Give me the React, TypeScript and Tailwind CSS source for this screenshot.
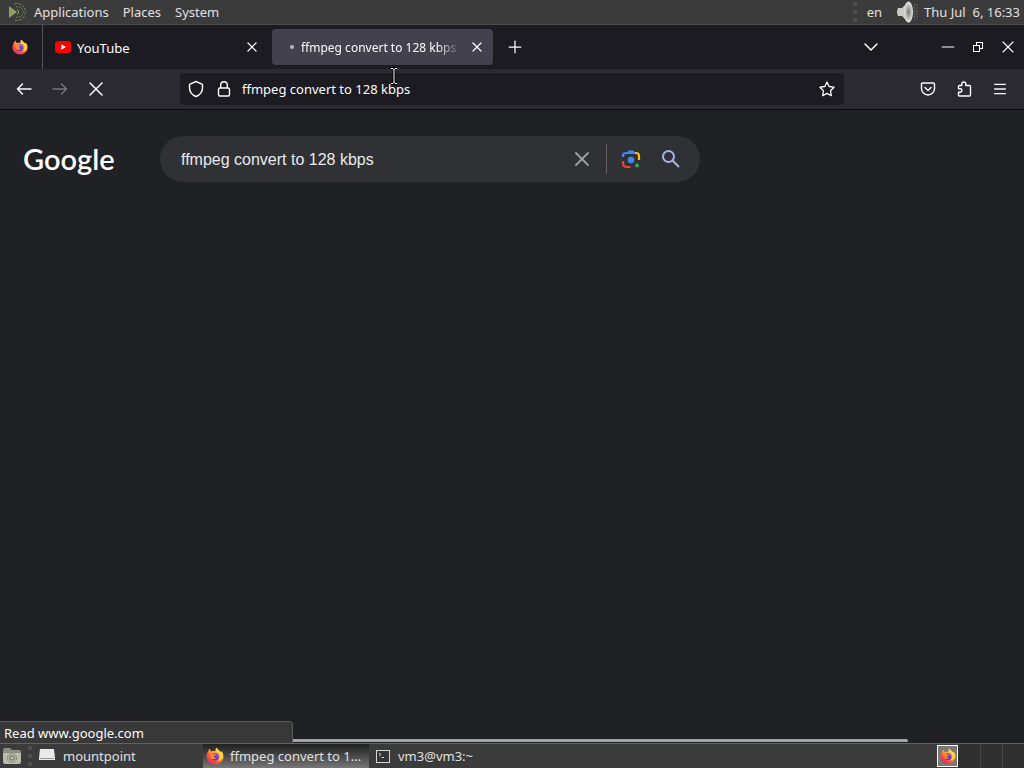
import { ChevronDown, Menu, Minus, Plus, X } from "lucide-react";

type IconProps = {
    className?: string;
};

const FirefoxIcon = ({ className = "" }: IconProps) => (
    <svg viewBox="0 0 32 32" className={className} aria-hidden="true">
        <defs>
            <linearGradient id="fox-body" x1="0.85" y1="0.1" x2="0.2" y2="0.95">
                <stop offset="0" stopColor="#fff14a" />
                <stop offset="0.35" stopColor="#ffb12c" />
                <stop offset="0.65" stopColor="#ff5a36" />
                <stop offset="1" stopColor="#e8246b" />
            </linearGradient>
            <linearGradient id="fox-globe" x1="0.7" y1="0" x2="0.3" y2="1">
                <stop offset="0" stopColor="#a44bf0" />
                <stop offset="1" stopColor="#4b35a8" />
            </linearGradient>
        </defs>
        <path
            fill="url(#fox-body)"
            d="M19 1c-2 2-3 5-2 7-3-1-5-1-7 0C8 7 7 5 7 3 5 4 4 6 4 8 2 10 1 13 1 17c0 8 7 14 15 14s15-6 15-14c0-4-1-8-4-10 0 1 0 2-1 2-2-3-5-4-7-8z"
        />
        <circle cx="16" cy="17" r="7" fill="url(#fox-globe)" />
        <path
            fill="#ff8a2b"
            d="M6 14c2-3 5-3 7-2 1 1 3 1 5 1-1 2-3 2-4 3 0 2 1 4 4 4-3 3-9 2-10-2l-2-4z"
        />
        <path fill="#ffd83b" d="M18 5c4 2 7 6 7 11 0 4-2 7-5 9 6 0 10-6 9-12-1-4-6-5-8-9z" />
    </svg>
);

const MateIcon = () => (
    <svg viewBox="0 0 20 20" className="size-5" fill="none" aria-hidden="true">
        <path d="M2 4l8 6-8 6z" fill="#8aa05e" />
        <path d="M7 2a8.500 8.500 0 1 1 0 16" stroke="#71885a" strokeDasharray="3 1" />
        <path d="M9 5a5.300 5.300 0 1 1 0 10" stroke="#71885a" strokeDasharray="2 1" />
        <path d="M10 7.500a2.700 2.700 0 0 1 0 5" stroke="#8aa05e" />
    </svg>
);

const SpeakerIcon = () => (
    <svg viewBox="0 0 22 24" className="h-6 w-[22px]" aria-hidden="true">
        <defs>
            <radialGradient id="cone">
                <stop offset="0" stopColor="#747474" />
                <stop offset="0.6" stopColor="#bdbdb9" />
                <stop offset="1" stopColor="#e4e4e0" />
            </radialGradient>
        </defs>
        <path d="M2 8h4l7-7v22l-7-7H2q-2-4 0-8z" fill="#c9c9c5" />
        <ellipse cx="12.500" cy="12" rx="4.500" ry="10.500" fill="url(#cone)" />
        <path d="M18.500 4v16M21 4v16" stroke="#626262" strokeDasharray="2 1" />
    </svg>
);

const YouTubeIcon = () => (
    <svg viewBox="0 0 16 12" className="h-3 w-4" aria-hidden="true">
        <rect width="16" height="12" rx="3" fill="#f00" />
        <path d="M6.300 3.300L11 6l-4.700 2.700z" fill="#fff" />
    </svg>
);

const ArrowIcon = ({ className = "" }: IconProps) => (
    <svg
        viewBox="0 0 16 16"
        className={`size-4 ${className}`}
        fill="none"
        stroke="currentColor"
        strokeWidth="1.500"
        strokeLinecap="round"
        strokeLinejoin="round"
        aria-hidden="true"
    >
        <path d="M15 8H1.500M6.500 3l-5 5 5 5" />
    </svg>
);

const ShieldIcon = () => (
    <svg viewBox="0 0 16 18" className="h-[18px] w-4" fill="none" stroke="#fbfbfe" strokeWidth="1.400" strokeLinejoin="round" aria-hidden="true">
        <path d="M8 1.500l6.500 2.800v3.200c0 4-2.500 7.500-6.500 9-4-1.500-6.500-5-6.500-9V4.300z" />
    </svg>
);

const LockIcon = () => (
    <svg viewBox="0 0 16 18" className="h-[18px] w-4" fill="none" stroke="#fbfbfe" strokeWidth="1.400" aria-hidden="true">
        <rect x="2.500" y="8" width="11" height="8" rx="1.500" />
        <path d="M4.700 8V5a3.300 3.300 0 0 1 6.600 0v3" />
    </svg>
);

const StarIcon = () => (
    <svg viewBox="0 0 16 16" className="size-4" fill="none" stroke="#fbfbfe" strokeWidth="1.300" strokeLinejoin="round" aria-hidden="true">
        <path d="M8 1l2.100 4.500 4.900.7-3.500 3.500.8 5L8 12.400l-4.300 2.300.8-5L1 6.200l4.900-.7z" />
    </svg>
);

const PocketIcon = () => (
    <svg viewBox="0 0 16 16" className="size-4" fill="none" stroke="#fbfbfe" strokeWidth="1.400" strokeLinecap="round" strokeLinejoin="round" aria-hidden="true">
        <path d="M2.500 2h11q1 0 1 1v4.500a6.500 6.500 0 0 1-13 0V3q0-1 1-1z" />
        <path d="M5 6.500l3 3 3-3" />
    </svg>
);

const PuzzleIcon = () => (
    <svg viewBox="0 0 16 16" className="size-4" fill="none" stroke="#fbfbfe" strokeWidth="1.400" strokeLinejoin="round" aria-hidden="true">
        <path d="M5.800 4.500V3a2 2 0 0 1 4 0v1.500h3.700q1 0 1 1V14q0 1-1 1H3.500q-1 0-1-1v-2.800h1.700a1.700 1.700 0 0 0 0-3.400H2.500V5.500q0-1 1-1z" />
    </svg>
);

const RestoreIcon = () => (
    <svg viewBox="0 0 12 12" className="size-3" fill="none" stroke="#fbfbfe" shapeRendering="crispEdges" aria-hidden="true">
        <path d="M1.500 4.500h6v6h-6zM4.500 4.500v-3h6v6h-3" />
    </svg>
);

const LensIcon = () => (
    <svg viewBox="0 0 20 20" className="size-5" fill="none" strokeWidth="2.200" aria-hidden="true">
        <path d="M2 8V7q0-3 3-3h10" stroke="#4285f4" />
        <path d="M6 4l1.500-2.500h5L14 4z" fill="#4285f4" />
        <path d="M14 4h1q3 0 3 3v4" stroke="#fbbc04" />
        <path d="M2 12v2q0 4 4 4h3.500" stroke="#ea4335" />
        <circle cx="10" cy="11" r="3.300" fill="#4285f4" />
        <circle cx="16" cy="16.500" r="2" fill="#34a853" />
    </svg>
);

const SearchIcon = () => (
    <svg viewBox="0 0 20 20" className="size-5" fill="none" stroke="#9bb9e8" strokeWidth="2" aria-hidden="true">
        <circle cx="7.500" cy="7.500" r="5.500" />
        <path d="M11.500 11.500l6.500 6.500" />
    </svg>
);

const FolderIcon = () => (
    <svg viewBox="0 0 20 18" className="h-[18px] w-5" aria-hidden="true">
        <path d="M1 3q0-2 2-2h5l2 2h7q2 0 2 2v2H1z" fill="#8e9084" />
        <path d="M1 6h18v9q0 2-2 2H3q-2 0-2-2z" fill="#b9bbaa" />
        <circle cx="10" cy="11" r="4.500" fill="none" stroke="#777b6c" strokeDasharray="2 1" />
        <path d="M8 9h2.500a2 2 0 0 1 0 4H8z" fill="none" stroke="#6a6e60" />
    </svg>
);

const DriveIcon = () => (
    <svg viewBox="0 0 16 14" className="h-3.5 w-4" aria-hidden="true">
        <path d="M1 0h14l1 9v2H0V9z" fill="#e9e9e9" />
        <path d="M1 9.500h14" stroke="#9a9a9a" />
    </svg>
);

const TerminalIcon = () => (
    <svg viewBox="0 0 14 13" className="h-[13px] w-3.5" fill="none" aria-hidden="true">
        <rect x="0.500" y="0.500" width="13" height="12" fill="#343434" stroke="#d6d6d6" />
        <path d="M3 3l2 1.500L3 6M5.500 7.500H8" stroke="#d6d6d6" />
    </svg>
);

const Grip = () => (
    <span className="flex flex-col gap-1" aria-hidden="true">
        <i className="size-1 bg-[#4d4d4d]" />
        <i className="size-1 bg-[#4d4d4d]" />
        <i className="size-1 bg-[#4d4d4d]" />
    </span>
);

const TopPanel = () => (
    <header className="flex h-[25px] items-center justify-between border-b border-[#4a4a4a] bg-[#3b3b3b] pr-1 pl-[7px] text-[#e0e0e0]">
        <nav className="flex items-center">
            <MateIcon />
            <button className="px-[7px]">Applications</button>
            <button className="px-[7px]">Places</button>
            <button className="px-[7px]">System</button>
        </nav>
        <div className="flex items-center">
            <Grip />
            <span className="pr-3.5 pl-[10px]">en</span>
            <SpeakerIcon />
            <time className="pl-[6px] whitespace-pre">Thu Jul  6, 16:33</time>
        </div>
    </header>
);

const TabStrip = () => (
    <div className="flex h-11 items-center bg-[#1c1b22]">
        <button aria-label="Firefox View" className="flex h-full w-[43px] items-center justify-center border-r border-[#56555e] pr-[2px]">
            <FirefoxIcon className="size-4" />
        </button>
        <div className="flex w-[229px] items-center pr-3 pl-3">
            <YouTubeIcon />
            <span className="flex-1 pt-px pl-[6px]">YouTube</span>
            <button aria-label="Close YouTube">
                <X className="size-4" strokeWidth={1.8} />
            </button>
        </div>
        <div className="flex h-9 w-[221px] items-center rounded bg-[#42414d] pr-2 pl-[18px]">
            <span className="size-1 rounded-full bg-[#b8b7c2]" />
            <span className="ml-[7px] flex-1 mask-r-from-85% pt-px text-[12px] whitespace-nowrap">
                ffmpeg convert to 128 kbps
            </span>
            <button aria-label="Close tab" className="ml-2">
                <X className="size-4" strokeWidth={1.8} />
            </button>
        </div>
        <button aria-label="New tab" className="ml-3">
            <Plus className="size-5" strokeWidth={1.5} />
        </button>
        <div className="ml-auto flex items-center pr-[6px]">
            <button aria-label="List all tabs" className="mr-[55px]">
                <ChevronDown className="size-6" strokeWidth={1.5} />
            </button>
            <div className="flex items-center gap-[14px]">
                <button aria-label="Minimize">
                    <Minus className="size-5" strokeWidth={1.3} />
                </button>
                <button aria-label="Restore">
                    <RestoreIcon />
                </button>
                <button aria-label="Close window">
                    <X className="size-5" strokeWidth={1.3} />
                </button>
            </div>
        </div>
    </div>
);

const Toolbar = () => (
    <div className="relative flex h-10 items-center bg-[#2b2a33] px-4">
        <div className="flex items-center gap-5">
            <button aria-label="Back">
                <ArrowIcon />
            </button>
            <button aria-label="Forward" disabled className="text-[#74737b]">
                <ArrowIcon className="rotate-180" />
            </button>
            <button aria-label="Stop" className="-mx-1">
                <X className="size-6" strokeWidth={1.5} />
            </button>
        </div>
        <div className="mx-[76px] flex h-8 flex-1 items-center rounded bg-[#1c1b22] pr-[9px] pl-2">
            <ShieldIcon />
            <span className="ml-3">
                <LockIcon />
            </span>
            <input
                aria-label="Address"
                className="ml-[10px] min-w-0 flex-1 bg-transparent outline-none"
                defaultValue="ffmpeg convert to 128 kbps"
            />
            <button aria-label="Bookmark this page">
                <StarIcon />
            </button>
        </div>
        <div className="flex items-center gap-5">
            <button aria-label="Save to Pocket">
                <PocketIcon />
            </button>
            <button aria-label="Extensions">
                <PuzzleIcon />
            </button>
            <button aria-label="Menu">
                <Menu className="size-4" strokeWidth={2} />
            </button>
        </div>
        {/* Mouse pointer */}
        <svg viewBox="0 0 8 18" className="absolute -top-[2px] left-[390px] h-[18px] w-2" fill="none" aria-hidden="true">
            <path d="M1 1.500h2l1 1 1-1h2M4 2v14M1 16.500h2l1-1 1 1h2" stroke="#000" strokeWidth="3" />
            <path d="M1 1.500h2l1 1 1-1h2M4 2v14M1 16.500h2l1-1 1 1h2" stroke="#fff" />
        </svg>
    </div>
);

const Page = () => (
    <main className="relative flex-1 border-t border-[#0c0c0d] bg-[#202124] pt-[26px]">
        <div className="flex items-center">
            <a href="#" className="w-40 pl-[23px] font-[Lato] text-[29px] leading-10 font-semibold text-white">
                Google
            </a>
            <form className="flex h-[46px] w-[540px] items-center rounded-full bg-[#303134] pr-[19px] pl-[21px]">
                <input
                    aria-label="Search"
                    className="min-w-0 flex-1 bg-transparent pt-[2px] font-['Liberation_Sans',sans-serif] text-base text-[#e8eaed] outline-none"
                    defaultValue="ffmpeg convert to 128 kbps"
                />
                <button type="button" aria-label="Clear" className="text-[#9aa0a6]">
                    <X className="size-6" strokeWidth={1.8} />
                </button>
                <span className="mr-[14px] ml-3 h-[30px] w-px bg-[#5f6368]" />
                <button type="button" aria-label="Search by image">
                    <LensIcon />
                </button>
                <button type="button" aria-label="Search" className="ml-5">
                    <SearchIcon />
                </button>
            </form>
        </div>
        {/* Horizontal scrollbar and link status */}
        <div className="absolute bottom-px left-0 h-[3px] w-[908px] rounded-full bg-[#a5a5a5]" />
        <div className="absolute bottom-0 left-0 h-[22px] w-[293px] rounded-tr-sm border-t border-r border-[#5c5c5c] bg-[#383838] pl-1 leading-[22px]">
            Read www.google.com
        </div>
    </main>
);

const BottomPanel = () => (
    <footer className="flex h-[25px] items-center border-t border-[#626262] bg-[#3b3b3b] pl-[2px] text-[#e0e0e0]">
        <button aria-label="Show desktop">
            <FolderIcon />
        </button>
        <span className="ml-[6px]">
            <Grip />
        </span>
        <button className="ml-[7px] flex w-[164px] items-center gap-2">
            <DriveIcon />
            mountpoint
        </button>
        <button className="flex h-full w-[166px] items-center gap-[6px] bg-linear-to-b from-[#202020] to-[#777] pl-[3px] whitespace-nowrap">
            <FirefoxIcon className="size-[18px]" />
            ffmpeg convert to 1...
        </button>
        <button className="ml-[7px] flex items-center gap-2">
            <TerminalIcon />
            vm3@vm3:~
        </button>
        <div className="ml-auto flex h-full">
            <button aria-label="Workspace 1" className="my-[1px] flex w-[21px] items-center justify-center border border-white bg-[#777]">
                <FirefoxIcon className="size-4" />
            </button>
            <span className="w-[23px] border-r border-[#484848] bg-[#303030]" />
            <span className="w-[22px] border-r border-[#484848] bg-[#303030]" />
            <span className="w-[21px] bg-[#303030]" />
        </div>
    </footer>
);

export default function App() {
    return (
        <div className="flex min-h-screen flex-col font-['Noto_Sans',sans-serif] text-[13px] leading-5 text-[#fbfbfe]">
            <TopPanel />
            <TabStrip />
            <Toolbar />
            <Page />
            <BottomPanel />
        </div>
    );
}
